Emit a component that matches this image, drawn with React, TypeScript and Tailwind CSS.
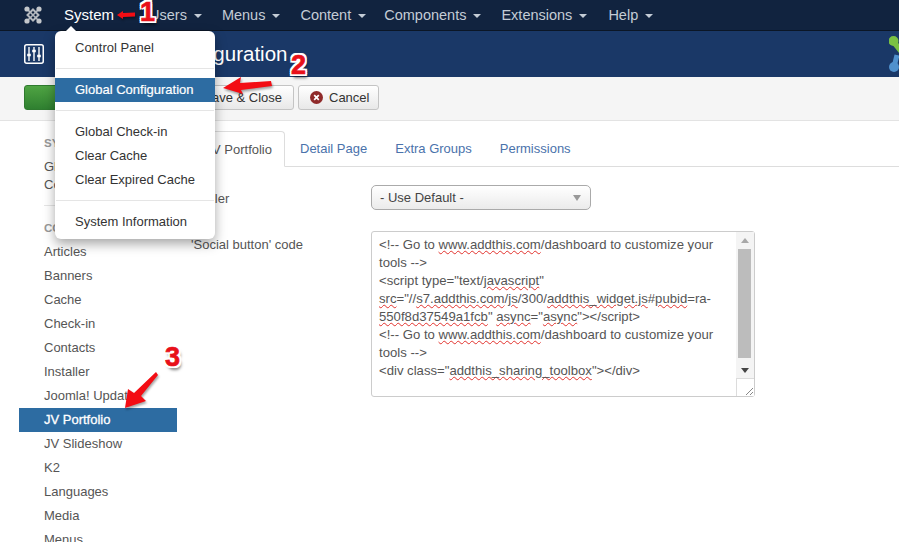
const navItems = [
  { label: 'System', gap: 'mr-[20px]' },
  { label: 'Users', gap: 'mr-[20px]' },
  { label: 'Menus', gap: 'mr-[20px]' },
  { label: 'Content', gap: 'mr-[18px]' },
  { label: 'Components', gap: 'mr-[20px]' },
  { label: 'Extensions', gap: 'mr-[21px]' },
  { label: 'Help', gap: 'mr-[20px]' },
];

const sidebarItems = ['Articles', 'Banners', 'Cache', 'Check-in', 'Contacts', 'Installer', 'Joomla! Update', 'JV Portfolio', 'JV Slideshow', 'K2', 'Languages', 'Media', 'Menus'];

const numberClass =
  "absolute font-['Liberation_Sans',Arial,sans-serif] font-bold text-[27px] leading-none text-[#e8101a] [-webkit-text-stroke:0.7px_#e8101a] [text-shadow:-2px_0_0_#fff,2px_0_0_#fff,0_-2px_0_#fff,0_2px_0_#fff,-2px_-2px_0_#fff,2px_-2px_0_#fff,-2px_2px_0_#fff,2px_2px_0_#fff,2px_4px_3px_rgba(0,0,0,0.5)]";

function Squiggle({ children }: { children: string }) {
  return <span className="underline decoration-wavy decoration-[#e2322d] decoration-1 underline-offset-1">{children}</span>;
}

function Arrow({ className, box, points }: { className: string; box: string; points: string }) {
  return (
    <svg className={`absolute drop-shadow-[1px_2px_1px_rgba(0,0,0,0.35)] ${className}`} viewBox={box}>
      <polygon points={points} fill="#f30d14" />
    </svg>
  );
}

function Dropdown() {
  return (
    <div className="absolute left-[55px] top-[31px] w-[160px] h-[208px] bg-white rounded-[6px] shadow-[0_5px_12px_rgba(0,0,0,0.35)] pt-1 text-[13px] text-[#333]">
      {/* little caret under System */}
      <div className="absolute left-[10px] -top-[5px] w-0 h-0 border-x-[6px] border-x-transparent border-b-[6px] border-b-white" />
      <div className="h-6 leading-[25px] px-5">Control Panel</div>
      <div className="h-px bg-[#e5e5e5] mx-px mt-[9px] mb-[9px]" />
      <div className="h-6 leading-6 px-5 bg-[#2d6ca2] text-white whitespace-nowrap [-webkit-text-stroke:0.2px_#fff]">Global Configuration</div>
      <div className="h-px bg-[#e5e5e5] mx-px mt-2 mb-2" />
      <div className="h-6 leading-[25px] px-5">Global Check-in</div>
      <div className="h-6 leading-[25px] px-5">Clear Cache</div>
      <div className="h-6 leading-[25px] px-5 whitespace-nowrap">Clear Expired Cache</div>
      <div className="h-px bg-[#e5e5e5] mx-px mt-[9px] mb-2" />
      <div className="h-6 leading-[25px] px-5 whitespace-nowrap">System Information</div>
    </div>
  );
}

function Scrollbar() {
  return (
    <div className="w-[18px] shrink-0 flex flex-col bg-[#f4f4f4]">
      <div className="h-[17px] flex items-center justify-center">
        <div className="w-0 h-0 border-x-[4px] border-x-transparent border-b-[5px] border-b-[#a8a8a8]" />
      </div>
      <div className="h-[109px] w-[13px] ml-[2px] bg-[#bcbcbc]" />
      <div className="h-[20px] pt-[5px] flex items-center justify-center">
        <div className="w-0 h-0 border-x-[4px] border-x-transparent border-t-[5px] border-t-[#444]" />
      </div>
      <div className="flex-1 bg-white border-t border-l border-[#dcdcdc] flex items-end justify-end">
        <svg width="9" height="9" viewBox="0 0 9 9">
          <path d="M1 8 L8 1 M5 8 L8 5" stroke="#888" strokeWidth="1" />
        </svg>
      </div>
    </div>
  );
}

export default function App() {
  return (
    <div className="relative w-[899px] h-[542px] overflow-hidden bg-white font-['Liberation_Sans',Arial,sans-serif]">
      {/* Top menu bar */}
      <div className="h-[31px] bg-[#11233f] border-b border-[#0b1626] flex items-center pl-6">
        <svg width="18" height="18" viewBox="0 0 18 18" className="mr-[22px]">
          <g stroke="#b4b8be" fill="none">
            <path d="M3 3 L15 15 M15 3 L3 15" strokeWidth="1.6" />
            <path d="M9 3.5 L14.5 9 L9 14.5 L3.5 9 Z" strokeWidth="2" />
          </g>
          <circle cx="3" cy="3" r="2.6" fill="#c4c7cb" />
          <circle cx="15" cy="3" r="2.6" fill="#c4c7cb" />
          <circle cx="3" cy="15" r="2.6" fill="#c4c7cb" />
          <circle cx="15" cy="15" r="2.6" fill="#c4c7cb" />
        </svg>
        {navItems.map((item, i) => (
          <div key={item.label} className={`flex items-center gap-[7px] pt-px ${item.gap} ${i === 0 ? 'text-[15px] text-white' : 'text-[14.5px] text-[#c4ccd6]'}`}>
            {item.label}
            <div className={`w-0 h-0 border-x-4 border-x-transparent border-t-4 ${i === 0 ? 'border-t-transparent' : 'border-t-[#c4ccd6]'}`} />
          </div>
        ))}
      </div>

      {/* Title bar */}
      <div className="h-[46px] bg-[#1a3867] flex items-center pl-6 overflow-hidden">
        <svg width="20" height="20" viewBox="0 0 20 20" className="mr-[11px] shrink-0">
          <rect x="0.75" y="0.75" width="18.5" height="18.5" rx="2" fill="none" stroke="#fff" strokeWidth="1.5" />
          <path d="M5 3 V17 M10 3 V17 M15 3 V17" stroke="#fff" strokeWidth="1.4" />
          <path d="M3.2 11 H6.8 M8.2 7 H11.8 M13.2 12 H16.8" stroke="#fff" strokeWidth="2.4" />
        </svg>
        <div className="text-[20.5px] text-white whitespace-nowrap">JV Portfolio Configuration</div>
        <svg width="10" height="36" viewBox="0 0 10 36" className="ml-auto shrink-0">
          <path d="M4 5 L12 15" stroke="#7ac143" strokeWidth="5.5" fill="none" />
          <circle cx="4.5" cy="5" r="5" fill="#7ac143" />
          <path d="M5 31 L8 19" stroke="#5091cd" strokeWidth="5" fill="none" />
          <circle cx="5" cy="31" r="5" fill="#5091cd" />
        </svg>
      </div>

      {/* Toolbar */}
      <div className="h-[44px] bg-[#f5f5f5] border-b border-[#e3e3e3] flex items-start pt-2 pl-6 gap-1 text-[13px] text-[#333]">
        <div className="w-[150px] h-[25px] rounded-[3px] border border-[#2f7a2f] bg-gradient-to-b from-[#4fa443] to-[#2f8030] text-white leading-[24px] text-center">Save</div>
        <div className="w-[116px] h-[25px] rounded-[3px] border border-[#c4c4c4] bg-gradient-to-b from-white to-[#e8e8e8] leading-[24px] text-right pr-[11px]">Save &amp; Close</div>
        <div className="w-[81px] h-[25px] rounded-[3px] border border-[#c4c4c4] bg-gradient-to-b from-white to-[#e8e8e8] flex items-center pl-[11px] gap-[6px] leading-[24px]">
          <svg width="13" height="13" viewBox="0 0 13 13">
            <circle cx="6.5" cy="6.5" r="6.5" fill="#8f2a2a" />
            <path d="M4.2 4.2 L8.8 8.8 M8.8 4.2 L4.2 8.8" stroke="#fff" strokeWidth="1.7" />
          </svg>
          Cancel
        </div>
      </div>

      <div className="flex">
        {/* Sidebar */}
        <div className="w-[158px] ml-[19px] shrink-0 text-[13px] text-[#555]">
          <div className="pl-[25px] pt-[14px] h-[37px] leading-4 text-[11.5px] font-bold text-[#999]">SYSTEM</div>
          <div className="pl-[25px] leading-[18px] pr-2">
            Global
            <br />
            Configuration
          </div>
          <div className="h-px bg-[#e5e5e5] ml-[25px] mr-2 mt-[11px]" />
          <div className="pl-[25px] pt-[14px] h-[34px] leading-4 text-[11.5px] font-bold text-[#999]">COMPONENTS</div>
          {sidebarItems.map((item) => (
            <div key={item} className={`h-6 leading-[23px] pl-[25px] ${item === 'JV Portfolio' ? 'bg-[#2d6ca2] text-white [-webkit-text-stroke:0.3px_#fff]' : ''}`}>
              {item}
            </div>
          ))}
        </div>

        {/* Main content */}
        <div className="flex-1 ml-3 pt-[10px] text-[13px] text-[#555]">
          <div className="h-[36px] border-b border-[#ddd] flex items-end text-[#4a72ab]">
            <div className="w-[96px] h-[36px] -mb-px bg-white border border-[#ddd] border-b-white rounded-t-[4px] pr-[12px] text-right leading-[35px] text-[#555]">JV Portfolio</div>
            <div className="ml-[2px] px-[13px] h-[35px] leading-[36px]">Detail Page</div>
            <div className="ml-[2px] px-[13px] h-[35px] leading-[36px]">Extra Groups</div>
            <div className="ml-[2px] px-[13px] h-[35px] leading-[36px]">Permissions</div>
          </div>

          <div className="flex h-[25px] mt-[18px] pl-[2px]">
            <div className="w-[180px] leading-[27px]">Dealer</div>
            <div className="w-[220px] h-[25px] rounded-[5px] border border-[#aaa] bg-gradient-to-b from-white to-[#ebebeb] flex items-center justify-between pl-2 pr-[9px] leading-[25px] text-[#444]">
              - Use Default -
              <div className="w-0 h-0 border-x-[4px] border-x-transparent border-t-[6px] border-t-[#999]" />
            </div>
          </div>

          <div className="flex mt-[21px] pl-[2px]">
            <div className="w-[180px] pt-[5px] leading-[18px]">'Social button' code</div>
            <div className="w-[384px] h-[166px] rounded-[3px] border border-[#ccc] flex justify-between">
              <div className="pl-[7px] pt-[4px] text-[13.15px] leading-[18px] text-[#555] whitespace-nowrap">
                <div>&lt;!-- Go to <Squiggle>www.addthis.com</Squiggle>/dashboard to customize your</div>
                <div>tools --&gt;</div>
                <div>&lt;script type="text/<Squiggle>javascript</Squiggle>"</div>
                <div><Squiggle>src</Squiggle>="//<Squiggle>s7.addthis.com</Squiggle>/<Squiggle>js</Squiggle>/300/<Squiggle>addthis_widget.js</Squiggle>#<Squiggle>pubid</Squiggle>=ra-</div>
                <div><Squiggle>550f8d37549a1fcb</Squiggle>" <Squiggle>async</Squiggle>="<Squiggle>async</Squiggle>"&gt;&lt;/script&gt;</div>
                <div>&lt;!-- Go to <Squiggle>www.addthis.com</Squiggle>/dashboard to customize your</div>
                <div>tools --&gt;</div>
                <div>&lt;div class="<Squiggle>addthis_sharing_toolbox</Squiggle>"&gt;&lt;/div&gt;</div>
              </div>
              <Scrollbar />
            </div>
          </div>
        </div>
      </div>

      <Dropdown />

      {/* Annotations */}
      <Arrow className="left-[116px] top-[9px] w-[20px] h-[12px]" box="116 9 20 12" points="117,15 123,11 123,13 135,12.5 135,16.5 123,17 123,19" />
      <div className={`${numberClass} left-[140px] top-[-1px]`}>1</div>
      <Arrow className="left-[221px] top-[75px] w-[53px] h-[21px]" box="221 75 53 21" points="223,88 241,77 240,83 271,81 272,86 241,90 243,94" />
      <div className={`${numberClass} left-[291px] top-[52px]`}>2</div>
      <Arrow className="left-[123px] top-[370px] w-[37px] h-[40px]" box="123 370 37 40" points="125,408 128,389 134,393 156,372 158,375 141,396 146,401" />
      <div className={`${numberClass} left-[165px] top-[344px]`}>3</div>
    </div>
  );
}
